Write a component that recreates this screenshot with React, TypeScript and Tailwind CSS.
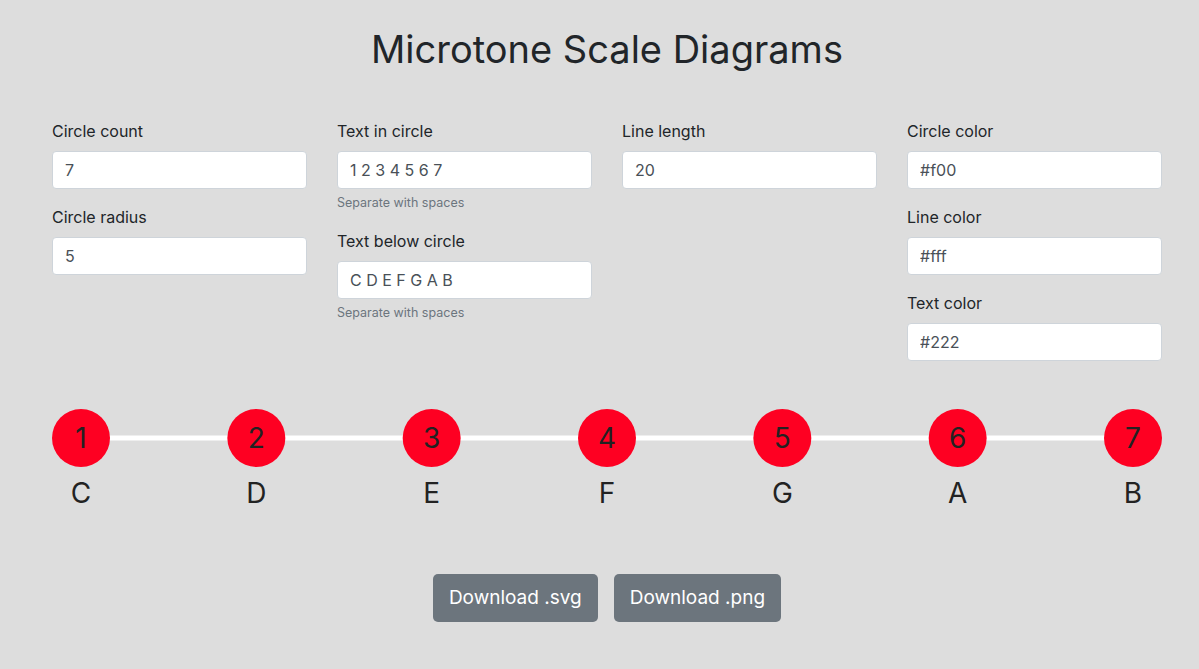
import { useState } from 'react'

type Field = { label: string; value: string; help?: string }

const columns: Field[][] = [
  [
    { label: 'Circle count', value: '7' },
    { label: 'Circle radius', value: '5' },
  ],
  [
    { label: 'Text in circle', value: '1 2 3 4 5 6 7', help: 'Separate with spaces' },
    { label: 'Text below circle', value: 'C D E F G A B', help: 'Separate with spaces' },
  ],
  [{ label: 'Line length', value: '20' }],
  [
    { label: 'Circle color', value: '#f00' },
    { label: 'Line color', value: '#fff' },
    { label: 'Text color', value: '#222' },
  ],
]

function FormField({ field }: { field: Field }) {
  const [value, setValue] = useState(field.value)
  return (
    <div className="mb-4">
      <label className="block mb-2 text-base leading-6 text-[#212529]">{field.label}</label>
      <input
        value={value}
        onChange={(e) => setValue(e.target.value)}
        className="block w-full h-[38px] px-3 rounded-[4px] border border-[#ced4da] bg-white text-base text-[#495057] outline-none"
      />
      {field.help && <small className="block mt-1 text-[12.5px] leading-[20px] text-[#6c757d]">{field.help}</small>}
    </div>
  )
}

function Diagram() {
  const numbers = ['1', '2', '3', '4', '5', '6', '7']
  const notes = ['C', 'D', 'E', 'F', 'G', 'A', 'B']
  const r = 29
  const cy = 61
  const pitch = (1110 - 2 * r) / 6
  return (
    <svg width="1110" height="180" viewBox="0 0 1110 180" className="block">
      <line x1={r} y1={cy} x2={1110 - r} y2={cy} stroke="#fff" strokeWidth="5" />
      {numbers.map((n, i) => {
        const cx = r + i * pitch
        return (
          <g key={n}>
            <circle cx={cx} cy={cy} r={r} fill="#fe0022" />
            <text x={cx} y={cy + 10} textAnchor="middle" fontSize="28" fill="#222" fontFamily="Inter, sans-serif">
              {n}
            </text>
            <text x={cx} y={cy + 65} textAnchor="middle" fontSize="28" fill="#222" fontFamily="Inter, sans-serif">
              {notes[i]}
            </text>
          </g>
        )
      })}
    </svg>
  )
}

export default function App() {
  return (
    <div className="min-h-screen bg-[#dddddd] text-[#212529]" style={{ fontFamily: 'Inter, "Noto Sans", sans-serif' }}>
      <div className="ml-[52px] w-[1110px] pt-[25px]">
        <h1 className="text-center text-[38px] leading-[48px] font-normal mb-[46px]">Microtone Scale Diagrams</h1>

        <div className="grid grid-cols-4 gap-x-[30px]">
          {columns.map((col, i) => (
            <div key={i}>
              {col.map((f) => (
                <FormField key={f.label} field={f} />
              ))}
            </div>
          ))}
        </div>

        <Diagram />

        <div className="flex justify-center gap-4 mt-[17px]">
          <button className="h-[48px] px-4 rounded-[5px] bg-[#6c757d] text-white text-[19px]">Download .svg</button>
          <button className="h-[48px] px-4 rounded-[5px] bg-[#6c757d] text-white text-[19px]">Download .png</button>
        </div>
      </div>
    </div>
  )
}
